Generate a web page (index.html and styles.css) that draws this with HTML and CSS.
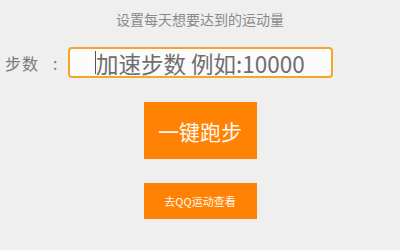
FILE: index.html
```html
<!DOCTYPE html>
<html lang="zh">
<head>
<meta charset="utf-8">
<link rel="stylesheet" href="styles.css">
</head>
<body>
<div class="page">
  <div class="title">设置每天想要达到的运动量</div>
  <div class="row">
    <span class="label"><span class="label-text">步数</span><span class="colon">:</span></span>
    <div class="input"><span class="caret"></span><span class="placeholder">加速步数 例如:10000</span></div>
  </div>
  <div class="btn big">一键跑步</div>
  <div class="btn small">去QQ运动查看</div>
</div>
</body>
</html>
```
FILE: styles.css
```css
html, body {
  margin: 0;
  padding: 0;
  background: #efefef;
  font-family: "Noto Sans CJK SC", "Noto Sans", sans-serif;
}
.page {
  width: 400px;
  height: 250px;
  display: flex;
  flex-direction: column;
  align-items: center;
  overflow: hidden;
}
.title {
  margin-top: 10px;
  font-size: 14px;
  line-height: 18px;
  color: #8a8a8a;
}
.row {
  align-self: stretch;
  display: flex;
  align-items: center;
  margin-top: 19px;
  padding-left: 5px;
}
.label {
  width: 63px;
  display: flex;
  align-items: center;
  font-size: 16px;
  color: #7a7a7a;
}
.label-text {
  letter-spacing: 1px;
}
.colon {
  margin-left: 14px;
}
.input {
  box-sizing: border-box;
  width: 265px;
  height: 31px;
  border: 2px solid #f4a62a;
  border-radius: 4px;
  background: #fbfbfb;
  display: flex;
  align-items: center;
  padding-left: 25px;
}
.caret {
  width: 1px;
  height: 23px;
  background: #555;
}
.placeholder {
  font-size: 22.5px;
  line-height: 26px;
  color: #6e6e6e;
}
.btn {
  width: 113px;
  background: #ff8205;
  color: #fff8ef;
  display: flex;
  align-items: center;
  justify-content: center;
}
.big {
  margin-top: 24px;
  height: 57px;
  font-size: 21px;
}
.small {
  margin-top: 24px;
  height: 36px;
  font-size: 11px;
}
```
